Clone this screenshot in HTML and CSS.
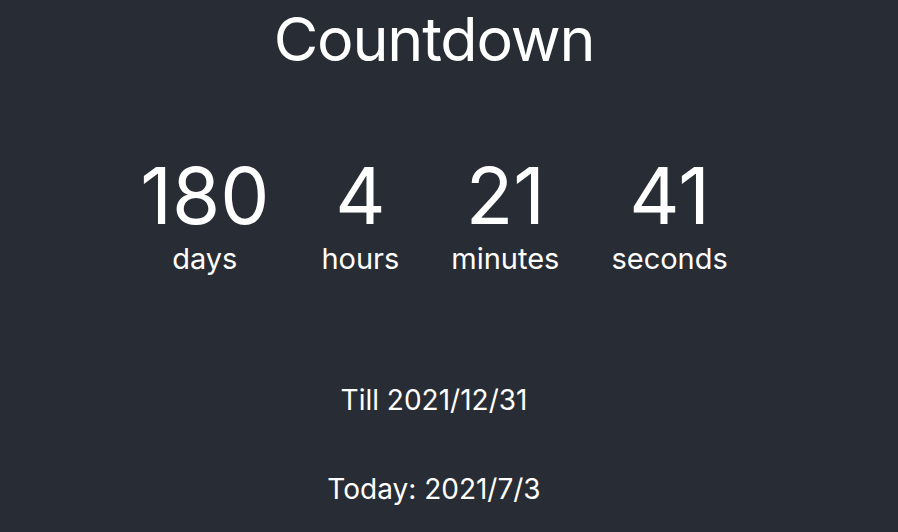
FILE: index.html
```html
<!DOCTYPE html>
<html lang="en">
<head>
<meta charset="utf-8">
<title>Countdown</title>
<link rel="stylesheet" href="styles.css">
</head>
<body>
<main class="app">
  <h1 class="title">Countdown</h1>
  <div class="timer">
    <div class="unit"><span class="value">180</span><span class="label">days</span></div>
    <div class="unit"><span class="value">4</span><span class="label">hours</span></div>
    <div class="unit"><span class="value">21</span><span class="label">minutes</span></div>
    <div class="unit"><span class="value">41</span><span class="label">seconds</span></div>
  </div>
  <p class="info till">Till 2021/12/31</p>
  <p class="info today">Today: 2021/7/3</p>
</main>
</body>
</html>
```
FILE: styles.css
```css
html, body {
  margin: 0;
  height: 100%;
  background: #282c34;
}
body {
  color: #ffffff;
  font-family: Inter, "Noto Sans", sans-serif;
  overflow: hidden;
}
.app {
  display: flex;
  flex-direction: column;
  align-items: center;
  width: 868px;
}
.title {
  margin: 9px 0 0;
  font-size: 61px;
  font-weight: 400;
  line-height: 1;
  letter-spacing: -1.2px;
}
.timer {
  display: flex;
  gap: 52px;
  margin-top: 87px;
}
.unit {
  display: flex;
  flex-direction: column;
  align-items: center;
}
.value {
  font-size: 78px;
  line-height: 1;
}
.label {
  font-size: 29px;
  line-height: 1.2;
  margin-top: 7px;
}
.info {
  font-size: 28px;
  line-height: 1.2;
  margin: 0;
}
.till {
  margin-top: 107px;
}
.today {
  margin-top: 56px;
}
```
